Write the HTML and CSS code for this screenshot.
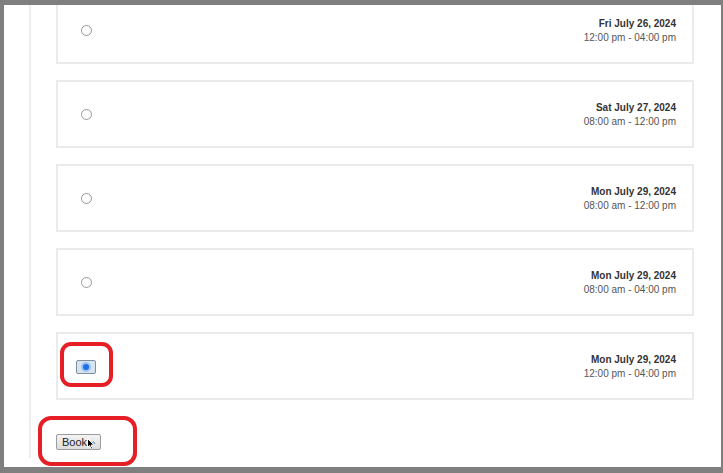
FILE: index.html
```html
<!DOCTYPE html>
<html lang="en">
<head>
    <meta charset="UTF-8">
    <meta name="viewport" content="width=device-width, initial-scale=1.0">
    <title>Book an appointment</title>
    <link rel="stylesheet" href="styles.css">
</head>
<body>
    <div class="frame">
        <div class="column">
            <form class="slots">
                <label class="slot">
                    <input type="radio" name="slot" class="radio">
                    <span class="slot-time">
                        <strong>Fri July 26, 2024</strong>
                        <span>12:00 pm - 04:00 pm</span>
                    </span>
                </label>
                <label class="slot">
                    <input type="radio" name="slot" class="radio">
                    <span class="slot-time">
                        <strong>Sat July 27, 2024</strong>
                        <span>08:00 am - 12:00 pm</span>
                    </span>
                </label>
                <label class="slot">
                    <input type="radio" name="slot" class="radio">
                    <span class="slot-time">
                        <strong>Mon July 29, 2024</strong>
                        <span>08:00 am - 12:00 pm</span>
                    </span>
                </label>
                <label class="slot">
                    <input type="radio" name="slot" class="radio">
                    <span class="slot-time">
                        <strong>Mon July 29, 2024</strong>
                        <span>08:00 am - 04:00 pm</span>
                    </span>
                </label>
                <label class="slot">
                    <span class="focus-ring">
                        <input type="radio" name="slot" class="radio radio-checked" checked>
                    </span>
                    <span class="slot-time">
                        <strong>Mon July 29, 2024</strong>
                        <span>12:00 pm - 04:00 pm</span>
                    </span>
                </label>
                <div class="actions">
                    <button type="button" class="book-btn">Book <span class="arrow">&raquo;</span></button>
                </div>
            </form>
        </div>
    </div>

    <!-- annotations drawn over the screenshot -->
    <span class="mark mark-radio"></span>
    <span class="mark mark-book"></span>
    <svg class="cursor" width="8" height="12" viewBox="0 0 8 12">
        <path d="M0.5 0.5 L0.5 9.5 L2.6 7.6 L4.2 11.2 L5.6 10.6 L4.1 7.1 L7 7.1 Z" fill="#000" stroke="#fff" stroke-width="1"/>
    </svg>
</body>
</html>
```

FILE: styles.css
```css
:root {
    --frame-bg: #7f7f7f;
    --line: #ededed;
    --card-border: #ebebeb;
    --text-dark: #333;
    --text-muted: #555;
    --mark-red: #e61e26;
}

body {
    margin: 0;
    background-color: var(--frame-bg);
    font-family: 'Liberation Sans', Arial, sans-serif;
}

.frame {
    margin: 5px 2px 6px 4px;
    height: 462px;
    background-color: #fff;
    overflow: hidden;
}

.column {
    margin-left: 25px;
    height: 100%;
    border-left: 2px solid var(--line);
    padding: 0 27px 0 25px;
}

.slots {
    margin-top: -9px;
    display: flex;
    flex-direction: column;
    gap: 16px;
}

.slot {
    box-sizing: border-box;
    height: 68px;
    border: 2px solid var(--card-border);
    display: flex;
    align-items: center;
    justify-content: space-between;
    padding: 1px 16px 0 23px;
}

.radio {
    appearance: none;
    -webkit-appearance: none;
    margin: 0;
    width: 11px;
    height: 11px;
    border: 1px solid #9a9a9a;
    border-radius: 50%;
    background-color: #fff;
    box-sizing: border-box;
}

.focus-ring {
    margin-left: -5px;
    width: 20px;
    height: 14px;
    box-sizing: border-box;
    border: 1px solid #7f8f9b;
    border-radius: 2px;
    background-color: #d6e3f0;
    display: flex;
    align-items: center;
    justify-content: center;
}

.radio-checked {
    width: 10px;
    height: 10px;
    border: 2px solid #9cc4f0;
    background-color: #1d6fe6;
}

.slot-time {
    display: flex;
    flex-direction: column;
    align-items: flex-end;
    font-size: 10px;
    line-height: 14px;
    color: var(--text-muted);
}

.slot-time strong {
    color: var(--text-dark);
}

.actions {
    padding-top: 16px;
}

.book-btn {
    height: 16px;
    padding: 0 5px;
    border: 1px solid #9b9b9b;
    border-radius: 2px;
    background: linear-gradient(#f4f4f4, #dcdcdc);
    font-family: 'Liberation Sans', Arial, sans-serif;
    font-size: 11px;
    line-height: 14px;
    color: #222;
}

.book-btn .arrow {
    font-size: 9px;
    color: #666;
}

.mark {
    position: absolute;
    border: 4px solid var(--mark-red);
    border-radius: 11px;
    box-sizing: border-box;
}

.mark-radio {
    left: 60px;
    top: 342px;
    width: 53px;
    height: 45px;
}

.mark-book {
    left: 38px;
    top: 416px;
    width: 99px;
    height: 50px;
    border-radius: 13px;
}

.cursor {
    position: absolute;
    left: 87px;
    top: 438px;
}
```
